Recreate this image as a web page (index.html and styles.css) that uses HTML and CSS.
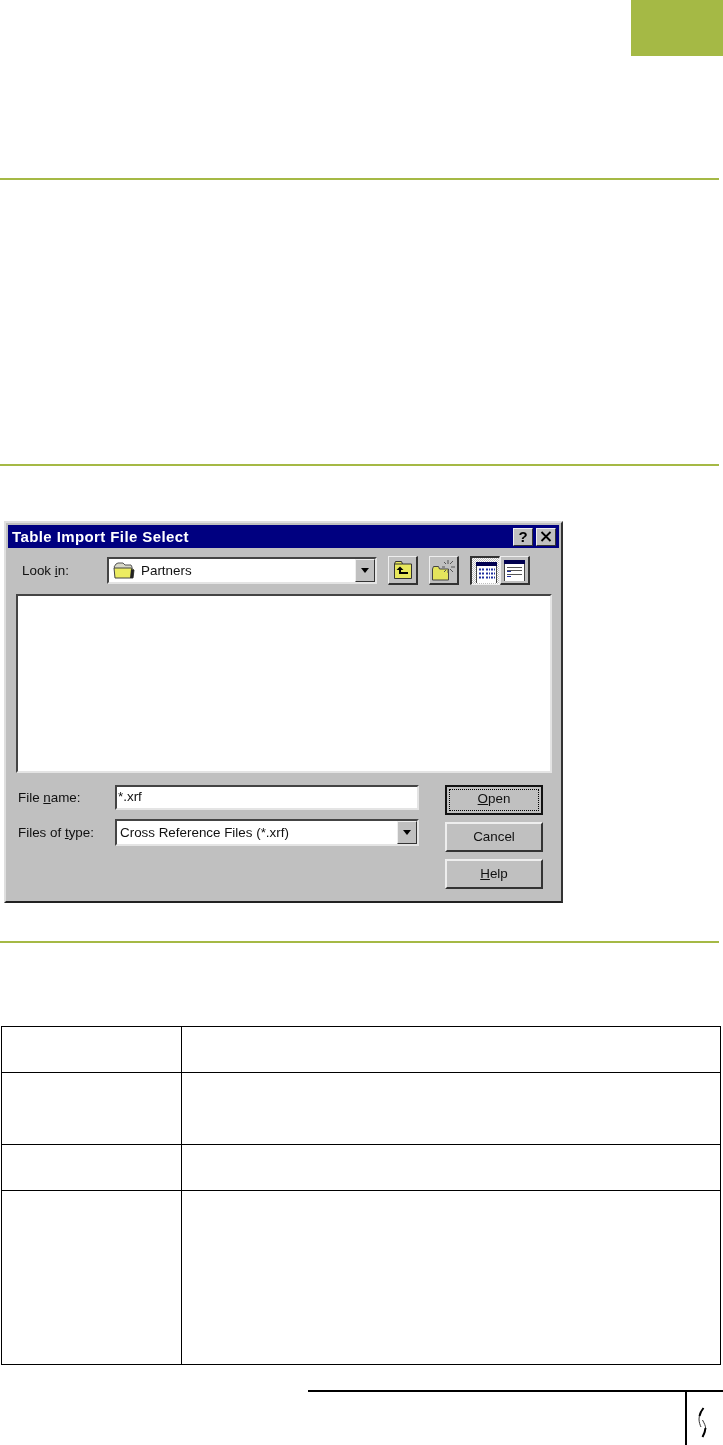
FILE: index.html
```html
<!DOCTYPE html>
<html lang="en">
<head>
    <meta charset="UTF-8">
    <meta name="viewport" content="width=device-width, initial-scale=1.0">
    <title>Table Import File Select</title>
    <link rel="stylesheet" href="styles.css">
</head>
<body>

    <!-- Chapter tab -->
    <div class="top-band">
        <div class="chapter-tab"></div>
    </div>

    <hr class="rule rule-first">
    <hr class="rule rule-second">

    <!-- Screenshot of the dialog -->
    <div class="dialog">
        <div class="title-bar">
            <span class="title-text">Table Import File Select</span>
            <div class="title-buttons">
                <button class="title-button">?</button>
                <button class="title-button">
                    <svg width="12" height="11" viewBox="0 0 12 11"><path d="M1.500 1l9 9M10.500 1l-9 9" stroke="#000" stroke-width="1.800" fill="none"/></svg>
                </button>
            </div>
        </div>

        <div class="look-row">
            <label class="look-label">Look <u>i</u>n:</label>
            <div class="combo look-combo">
                <svg class="combo-icon" width="22" height="17" viewBox="0 0 22 17">
                    <path d="M1 5l2-3 2-1h5l2 2h6l1 2v3H3z" fill="#d8d8c8" stroke="#555"/>
                    <path d="M1 6h17l3 2-1 8H2z" fill="#ecec62" stroke="#444"/>
                    <path d="M18 7l3 1-1 8h-3z" fill="#222"/>
                </svg>
                <span class="combo-text">Partners</span>
                <span class="combo-arrow"><i></i></span>
            </div>
            <div class="toolbar">
                <button class="tool-button">
                    <svg width="20" height="20" viewBox="0 0 20 20">
                        <path d="M1.500 4l1-2.500h6l1 2.500h9v14.500h-17z" fill="#e8e85c" stroke="#333"/>
                        <path d="M1.500 4h8" stroke="#333"/>
                        <path d="M7 6.500L3.500 10H6v4h9v-2H8v-2h2.500z" fill="#000"/>
                    </svg>
                </button>
                <button class="tool-button">
                    <svg width="23" height="21" viewBox="0 0 23 21">
                        <path d="M.5 9l1-2.500h5l1 2.500h9v11H.5z" fill="#e4e45c" stroke="#444"/>
                        <path d="M16 0v4M16 10v3M10 7h3M19 7h4M12 2l2 2M21 1l-3 3M12 12l2-2M21 12l-3-3" stroke="#555" fill="none"/>
                    </svg>
                </button>
                <div class="view-buttons">
                    <button class="tool-button view-button view-active">
                        <svg width="21" height="21" viewBox="0 0 21 21">
                            <rect width="21" height="21" fill="#fff"/>
                            <rect width="21" height="4" fill="#000050"/>
                            <path d="M.5 4v17M20.500 4v17" stroke="#444"/>
                            <path d="M3 7.500h5M10 7.500h4M15 7.500h4M3 11.500h5M10 11.500h4M15 11.500h4M3 15.500h5M10 15.500h4M15 15.500h4" stroke="#2030a0" stroke-width="2" stroke-dasharray="2 1"/>
                        </svg>
                    </button>
                    <button class="tool-button view-button">
                        <svg width="21" height="21" viewBox="0 0 21 21">
                            <rect width="21" height="21" fill="#fff"/>
                            <rect width="21" height="4" fill="#000050"/>
                            <path d="M.5 4v17M20.500 4v17" stroke="#444"/>
                            <path d="M3 7.500h15M3 10.500h15M3 14.500h15" stroke="#555"/>
                            <path d="M3 11.500h4M3 16.500h4" stroke="#2030a0"/>
                        </svg>
                    </button>
                </div>
            </div>
        </div>

        <div class="file-list"></div>

        <div class="form-area">
            <div class="form-fields">
                <div class="field-row">
                    <label class="field-label">File <u>n</u>ame:</label>
                    <div class="field-input name-input">*.xrf</div>
                </div>
                <div class="field-row type-row">
                    <label class="field-label">Files of <u>t</u>ype:</label>
                    <div class="combo type-combo">
                        <span class="combo-text">Cross Reference Files (*.xrf)</span>
                        <span class="combo-arrow"><i></i></span>
                    </div>
                </div>
            </div>
            <div class="form-buttons">
                <button class="push-button default-button"><span><u>O</u>pen</span></button>
                <button class="push-button">Cancel</button>
                <button class="push-button"><u>H</u>elp</button>
            </div>
        </div>
    </div>

    <hr class="rule rule-third">

    <!-- Empty parameter table -->
    <table class="info-table">
        <tr class="row-short"><td class="col-name"></td><td></td></tr>
        <tr class="row-mid"><td class="col-name"></td><td></td></tr>
        <tr class="row-short"><td class="col-name"></td><td></td></tr>
        <tr class="row-tall"><td class="col-name"></td><td></td></tr>
    </table>

    <footer class="page-footer">
        <div class="footer-logo">
            <svg width="12" height="32" viewBox="0 0 12 32">
                <path d="M6.500 1C4 4 2 8 2 12c0 3 1 6 2 8" stroke="#333" stroke-width="1" fill="none"/>
                <path d="M6.500 1C4.500 3.500 3 6 2.500 9" stroke="#000" stroke-width="2" fill="none"/>
                <path d="M5.500 13c1.500 3 3.500 6 3 9-.5 3-1.500 6-3 8" stroke="#333" stroke-width="1" fill="none"/>
                <path d="M8.500 21c-.3 3-1.500 6.500-3 9" stroke="#000" stroke-width="2" fill="none"/>
            </svg>
        </div>
    </footer>

</body>
</html>
```
FILE: styles.css
```css
body {
    font-family: "Liberation Sans", Arial, sans-serif;
    margin: 0;
    padding: 0;
    background-color: #fff;
    color: #000;
}

.top-band {
    display: flex;
    justify-content: flex-end;
    height: 56px;
}
.chapter-tab {
    width: 92px;
    background-color: #a5b945;
}

/* Green rules */
.rule {
    width: 719px;
    height: 2px;
    margin: 0;
    border: none;
    background-color: #a5b945;
}
.rule-first {
    margin-top: 122px;
}
.rule-second {
    margin-top: 284px;
}
.rule-third {
    margin-top: 38px;
}

/* Dialog */
.dialog {
    box-sizing: border-box;
    width: 559px;
    height: 382px;
    margin: 55px 0 0 4px;
    background-color: #c0c0c0;
    border-top: 2px solid #dfdfdf;
    border-left: 2px solid #dfdfdf;
    border-right: 2px solid #333;
    border-bottom: 2px solid #222;
    padding: 2px;
    font-size: 13.4px;
    color: #111;
    filter: blur(0.4px);
}
.title-bar {
    display: flex;
    justify-content: space-between;
    align-items: center;
    height: 23px;
    background-color: #000080;
    padding: 0 3px 0 4px;
}
.title-text {
    color: #fff;
    font-weight: bold;
    font-size: 15px;
    letter-spacing: 0.4px;
}
.title-buttons {
    display: flex;
    gap: 3px;
}
.title-button {
    display: flex;
    align-items: center;
    justify-content: center;
    box-sizing: border-box;
    width: 20px;
    height: 18px;
    padding: 0;
    background-color: #c0c0c0;
    border: 1px solid;
    border-color: #f0f0f0 #333 #333 #f0f0f0;
    font-family: inherit;
    font-size: 15px;
    font-weight: bold;
}

.look-row {
    display: flex;
    align-items: center;
    height: 29px;
    margin-top: 8px;
    padding-left: 14px;
}
.look-label {
    width: 85px;
}

/* Sunken boxes share one bevel */
.combo,
.field-input,
.file-list {
    box-sizing: border-box;
    background-color: #fff;
    border: 2px solid;
    border-color: #444 #e4e4e4 #e4e4e4 #444;
}
.combo {
    display: flex;
    align-items: center;
}
.look-combo {
    width: 270px;
    height: 27px;
    padding-left: 4px;
}
.combo-icon {
    margin-right: 6px;
}
.combo-text {
    flex: 1;
    white-space: nowrap;
}
.combo-arrow {
    display: flex;
    align-items: center;
    justify-content: center;
    box-sizing: border-box;
    width: 20px;
    height: 100%;
    background-color: #c0c0c0;
    border: 1px solid;
    border-color: #eee #333 #333 #eee;
}
.combo-arrow i {
    border-top: 5px solid #000;
    border-left: 4px solid transparent;
    border-right: 4px solid transparent;
}

.toolbar {
    display: flex;
    margin-left: 11px;
}
.tool-button {
    display: flex;
    align-items: center;
    justify-content: center;
    box-sizing: border-box;
    width: 30px;
    height: 29px;
    margin-right: 11px;
    padding: 0;
    background-color: #c0c0c0;
    border-style: solid;
    border-width: 1px 2px 2px 1px;
    border-color: #eee #333 #333 #eee;
}
.view-buttons {
    display: flex;
}
.view-button {
    margin-right: 0;
}
.view-active {
    background: repeating-conic-gradient(#fff 0 25%, #c0c0c0 0 50%) 0 0 / 2px 2px;
    border-width: 2px 1px 1px 2px;
    border-color: #333 #eee #eee #333;
    padding: 2px 0 0 2px;
}

.file-list {
    width: 536px;
    height: 179px;
    margin: 9px 0 0 8px;
}

.form-area {
    display: flex;
    margin-top: 12px;
}
.form-fields {
    padding-left: 10px;
}
.field-row {
    display: flex;
    align-items: center;
    height: 25px;
}
.type-row {
    height: 27px;
    margin-top: 9px;
}
.field-label {
    width: 97px;
}
.field-input {
    width: 304px;
    height: 25px;
    padding: 2px 0 0 1px;
}
.type-combo {
    width: 304px;
    height: 27px;
    padding-left: 3px;
}
.form-buttons {
    display: flex;
    flex-direction: column;
    gap: 7px;
    margin-left: 26px;
}
.push-button {
    box-sizing: border-box;
    width: 98px;
    height: 30px;
    padding: 0 0 2px;
    background-color: #c0c0c0;
    border: 2px solid;
    border-color: #eee #333 #333 #eee;
    font-family: inherit;
    font-size: 13.4px;
    color: #111;
}
.default-button {
    border-color: #111;
    padding: 2px;
}
.default-button span {
    display: flex;
    align-items: center;
    justify-content: center;
    height: 100%;
    padding-bottom: 3px;
    box-sizing: border-box;
    border: 1px dotted #000;
}

/* Table */
.info-table {
    width: 720px;
    margin: 83px 0 0 1px;
    border-collapse: collapse;
    table-layout: fixed;
}
.info-table td {
    padding: 0;
    border: 1px solid #000;
}
.col-name {
    width: 179px;
}
.row-short {
    height: 46px;
}
.row-mid {
    height: 72px;
}
.row-tall {
    height: 174px;
}

/* Footer */
.page-footer {
    display: flex;
    justify-content: flex-end;
    box-sizing: border-box;
    width: 415px;
    height: 55px;
    margin: 25px 0 0 308px;
    border-top: 2px solid #000;
}
.footer-logo {
    box-sizing: border-box;
    width: 38px;
    border-left: 2px solid #000;
    padding: 15px 0 0 10px;
}
.footer-logo svg {
    filter: blur(0.3px);
}
```
